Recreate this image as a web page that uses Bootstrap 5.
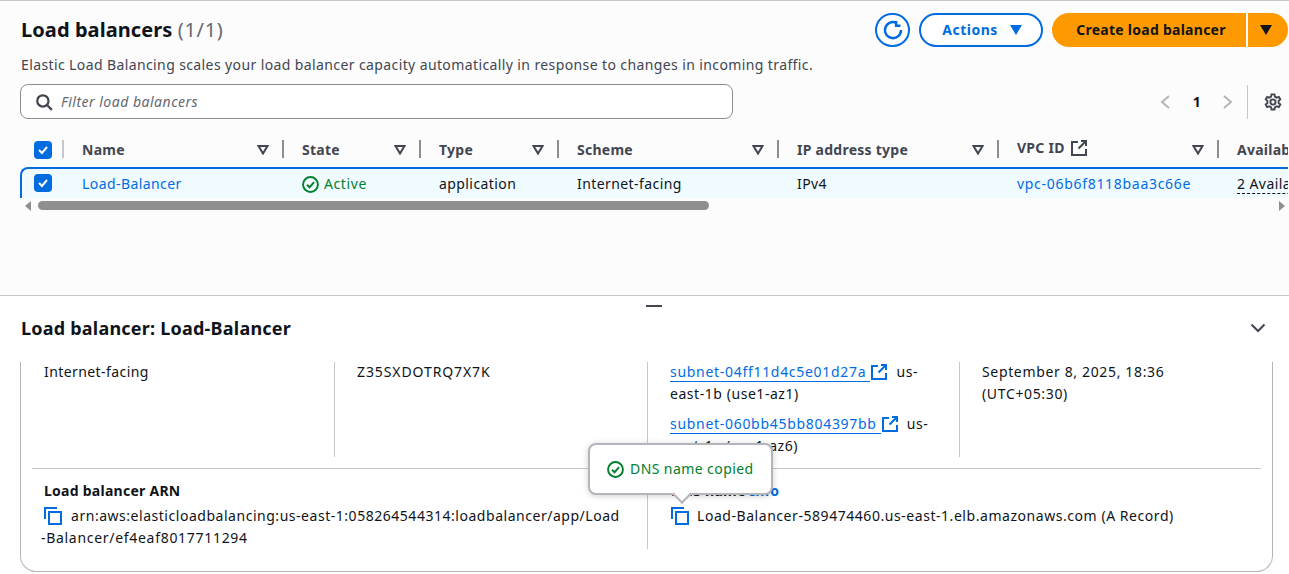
<!DOCTYPE html>
<html lang="en">
<head>
<meta charset="utf-8">
<title>Load balancers</title>
<link href="https://cdn.jsdelivr.net/npm/bootstrap@5.3.0/dist/css/bootstrap.min.css" rel="stylesheet">
<style>
html,body{height:574px;overflow:hidden}
body{font-family:"Noto Sans",sans-serif;font-size:14px;line-height:22px;color:#0f141a;background:#fff;letter-spacing:.42px}
a{color:#006ce0;text-decoration:none}
.fw-bold,b,.head-cell,.pill-btn{letter-spacing:.26px}
.id-text{letter-spacing:.7px}
.code-text{letter-spacing:.9px}
.date-text{letter-spacing:.65px}
.dns-text{letter-spacing:.55px}
.az-text{letter-spacing:.55px}
.top-pane{height:296px;background:#fcfcfd;border-top:1px solid #c6c6cd;border-bottom:1px solid #c6c6cd;padding:12px 1px 0 20px;overflow:hidden}
.page-title{font-size:20px;line-height:34px;font-weight:700;margin:0 0 0 1px;letter-spacing:.08px}
.page-title span{font-weight:400;color:#656871;letter-spacing:.7px}
.page-desc{color:#424650;line-height:20px;margin:8px 0 0 1px;font-size:14px;letter-spacing:.39px}
.pill-btn{height:34px;border-radius:17px;font-weight:700;font-size:14px;line-height:20px;display:flex;align-items:center;justify-content:center;background:#fff;border:2px solid #006ce0;color:#006ce0;padding:0}
.round-btn{width:35px}
.act-btn{width:124px;gap:12px;margin-left:9px;letter-spacing:.5px;padding-left:2px}
.go-wrap{margin-left:9px}
.go-btn{background:#f90;border:0;color:#0f141a;width:194px;border-radius:17px 0 0 17px;padding-left:4px}
.go-caret{background:#f90;border:0;width:40px;border-radius:0 17px 17px 0;margin-left:2px;padding-right:4px}
.filter-row{margin-top:9px}
.filter-box{width:713px;height:35px;border:1px solid #8c8c94;border-radius:8px;background:#fff;display:flex;align-items:center;padding-left:14px;gap:8px;color:#656871;font-style:italic;letter-spacing:.5px}
.pager{width:143px;color:#0f141a}
.pager b{font-weight:700;width:18px;text-align:center;margin:0 14px 0 16px}
.pager-prev{margin-left:13px}
.pager-sep{width:1px;height:34px;background:#c6c6cd;margin:0 16px 0 13px}
.tbl-wrap{overflow:hidden;margin-top:15px;width:1268px}
.lb-table{display:grid;grid-template-columns:44px 220px 137px 138px 220px 220px 220px 200px;width:1399px;margin:0}
.head-cell{height:33px;color:#424650;font-weight:700;display:flex;align-items:center;justify-content:space-between;padding:0 15px 2px 18px;position:relative;white-space:nowrap}
.head-cell::after{content:"";position:absolute;right:0;top:6px;height:18px;width:2px;background:#8c8c94}
.head-cell.first::after{background:#c6c6cd}
.head-cell.first{padding:0 0 2px 14px;justify-content:flex-start}
.head-cell.last::after{display:none}
.body-cell{height:31px;background:#f0fbff;border-top:2px solid #006ce0;padding:4px 0 0 18px;white-space:nowrap}
.body-cell.first{border-left:2px solid #006ce0;border-top-left-radius:8px;padding:5px 0 0 12px}
.tick{width:18px;height:18px;background:#006ce0;border-radius:4px;display:flex;align-items:center;justify-content:center}
.state-ok{color:#00802f;display:flex;align-items:center;gap:5px;letter-spacing:.6px}
.dash-under{border-bottom:1px dashed #0f141a}
.head-link{display:flex;gap:6px;align-items:center;position:relative;top:-2px}
.scroll-track{height:12px;margin-top:2px;position:relative;width:1268px}
.scroll-arrow-l{position:absolute;left:5px;top:1px;width:0;height:0;border:5px solid transparent;border-left:0;border-right:6px solid #8f8f8f}
.scroll-arrow-r{position:absolute;right:3px;top:1px;width:0;height:0;border:5px solid transparent;border-right:0;border-left:6px solid #8f8f8f}
.scroll-thumb{position:absolute;left:18px;top:1px;height:9px;width:671px;background:#8f8f8f;border-radius:5px}
.bottom-pane{height:278px;position:relative}
.drag-mark{position:absolute;left:646px;top:9px;width:16px;height:2px;background:#424650}
.panel-head{height:66px;padding:0 23px 2px 21px}
.panel-title{font-size:18px;line-height:24px;font-weight:700;margin:0;letter-spacing:.22px}
.detail-box{width:1253px;margin-left:20px;height:210px;border:1px solid #b4b4bb;border-top:0;border-radius:0 0 16px 16px;padding:0 11px}
.info-grid{display:grid;grid-template-columns:302px 313px 312px 1fr;height:95px;padding-top:0}
.info-grid>div{padding:0 12px 0 12px;height:95px;position:relative}
.info-grid>div+div{border-left:1px solid #c6c6cd;padding-left:22px;padding-right:24px}
.info-line{margin-top:-1px}
.subnet-gap{margin-top:8px}
.sub-link{border-bottom:1px solid #006ce0;padding-right:4px}
.link-ico{vertical-align:-3px;margin:0 5px 0 1px}
.wide-rule{height:1px;background:#c6c6cd;margin-top:11px}
.arn-grid{display:grid;grid-template-columns:615px 1fr;height:79px}
.arn-grid>div{padding-top:11px;position:relative}
.arn-left{padding-left:12px;padding-right:0}
.arn-right{border-left:1px solid #c6c6cd;padding-left:23px}
.arn-break{margin:3px 0 0 -3px;white-space:nowrap;letter-spacing:.53px}
.arn-tail{letter-spacing:.7px}
.copy-ico{vertical-align:-4px;margin:0 9px 0 3px}
.dns-ico{vertical-align:-4px;margin-right:8px}
.dns-line{margin-top:3px;white-space:nowrap}
.toast-pop{position:absolute;left:-60px;top:-26px;width:185px;height:52px;background:#fff;border:2px solid #b4b4bb;border-radius:8px;box-shadow:0 1px 6px rgba(15,20,26,.2);color:#00802f;display:flex;align-items:center;gap:6px;padding:0 0 0 17px;z-index:3}
.toast-pop::after{content:"";position:absolute;left:85px;bottom:-8px;width:14px;height:14px;background:#fff;border-right:2px solid #b4b4bb;border-bottom:2px solid #b4b4bb;transform:rotate(45deg)}
</style>
</head>
<body>
<section class="top-pane">
  <div class="d-flex justify-content-between align-items-start">
    <div>
      <h1 class="page-title">Load balancers <span>(1/1)</span></h1>
      <p class="page-desc">Elastic Load Balancing scales your load balancer capacity automatically in response to changes in incoming traffic.</p>
    </div>
    <div class="d-flex">
      <button class="pill-btn round-btn" aria-label="Refresh"><svg width="20" height="20" viewBox="0 0 16 16" fill="none" stroke="#006ce0" stroke-width="2"><path d="M10.5 2.2A6.4 6.4 0 1 0 14.4 8"/><path d="M10.5 .8v3.7H14"/></svg></button>
      <button class="pill-btn act-btn">Actions <svg width="12" height="10" viewBox="0 0 12 10"><path d="M0 0h12L6 10z" fill="#006ce0"/></svg></button>
      <div class="d-flex go-wrap">
        <button class="pill-btn go-btn">Create load balancer</button>
        <button class="pill-btn go-caret" aria-label="More"><svg width="12" height="10" viewBox="0 0 12 10"><path d="M0 0h12L6 10z" fill="#0f141a"/></svg></button>
      </div>
    </div>
  </div>
  <div class="d-flex justify-content-between align-items-center filter-row">
    <div class="filter-box"><svg width="18" height="18" viewBox="0 0 16 16" fill="none" stroke="#424650" stroke-width="2"><circle cx="7" cy="7" r="5"/><path d="M10.6 10.6 15 15"/></svg>Filter load balancers</div>
    <div class="pager d-flex align-items-center">
      <svg class="pager-prev" width="14" height="16" viewBox="0 0 14 16" fill="none" stroke="#b4b4bb" stroke-width="2"><path d="M11 2 4 8l7 6"/></svg>
      <b>1</b>
      <svg width="14" height="16" viewBox="0 0 14 16" fill="none" stroke="#b4b4bb" stroke-width="2"><path d="m4 2 7 6-7 6"/></svg>
      <span class="pager-sep"></span>
      <svg width="18" height="18" viewBox="0 0 16 16" fill="none" stroke="#424650" stroke-width="1.7"><circle cx="8" cy="8" r="2.3"/><path d="M6.7 1.2h2.6l.4 2 1.6.9 1.9-.7 1.3 2.3-1.5 1.3v1.9l1.5 1.3-1.3 2.3-1.9-.7-1.6.9-.4 2H6.7l-.4-2-1.6-.9-1.9.7-1.3-2.3 1.5-1.3V7l-1.5-1.3 1.3-2.3 1.9.7 1.6-.9z"/></svg>
    </div>
  </div>
  <div class="tbl-wrap">
    <div class="lb-table">
      <div class="head-cell first"><span class="tick"><svg width="12" height="12" viewBox="0 0 12 12" fill="none" stroke="#fff" stroke-width="2"><path d="m2 6 3 3 5-6"/></svg></span></div>
      <div class="head-cell">Name <svg width="12" height="10" viewBox="0 0 12 10" fill="none" stroke="#424650" stroke-width="2"><path d="M1.5 1h9L6 8.5z"/></svg></div>
      <div class="head-cell">State <svg width="12" height="10" viewBox="0 0 12 10" fill="none" stroke="#424650" stroke-width="2"><path d="M1.5 1h9L6 8.5z"/></svg></div>
      <div class="head-cell">Type <svg width="12" height="10" viewBox="0 0 12 10" fill="none" stroke="#424650" stroke-width="2"><path d="M1.5 1h9L6 8.5z"/></svg></div>
      <div class="head-cell">Scheme <svg width="12" height="10" viewBox="0 0 12 10" fill="none" stroke="#424650" stroke-width="2"><path d="M1.5 1h9L6 8.5z"/></svg></div>
      <div class="head-cell">IP address type <svg width="12" height="10" viewBox="0 0 12 10" fill="none" stroke="#424650" stroke-width="2"><path d="M1.5 1h9L6 8.5z"/></svg></div>
      <div class="head-cell"><span class="head-link">VPC ID <svg width="16" height="16" viewBox="0 0 16 16" fill="none" stroke="#424650" stroke-width="2"><path d="M7 2H1v13h14V9"/><path d="M10 1h5v5M15 1 7.5 8.5"/></svg></span> <svg width="12" height="10" viewBox="0 0 12 10" fill="none" stroke="#424650" stroke-width="2"><path d="M1.5 1h9L6 8.5z"/></svg></div>
      <div class="head-cell last">Availability Zones</div>

      <div class="body-cell first"><span class="tick"><svg width="12" height="12" viewBox="0 0 12 12" fill="none" stroke="#fff" stroke-width="2"><path d="m2 6 3 3 5-6"/></svg></span></div>
      <div class="body-cell"><a href="#">Load-Balancer</a></div>
      <div class="body-cell"><span class="state-ok"><svg width="17" height="17" viewBox="0 0 16 16" fill="none" stroke="#00802f" stroke-width="1.8"><circle cx="8" cy="8" r="7"/><path d="m4.7 8.2 2.4 2.4 4.3-4.8"/></svg>Active</span></div>
      <div class="body-cell">application</div>
      <div class="body-cell">Internet-facing</div>
      <div class="body-cell">IPv4</div>
      <div class="body-cell"><a class="id-text" href="#">vpc-06b6f8118baa3c66e</a></div>
      <div class="body-cell"><span class="dash-under">2 Availability Zones</span></div>
    </div>
  </div>
  <div class="scroll-track"><span class="scroll-arrow-l"></span><span class="scroll-thumb"></span><span class="scroll-arrow-r"></span></div>
</section>
<section class="bottom-pane">
  <span class="drag-mark"></span>
  <div class="panel-head d-flex justify-content-between align-items-center">
    <h2 class="panel-title">Load balancer: Load-Balancer</h2>
    <svg width="16" height="10" viewBox="0 0 16 10" fill="none" stroke="#424650" stroke-width="2"><path d="m1.5 1.5 6.5 6.5 6.5-6.5"/></svg>
  </div>
  <div class="detail-box">
    <div class="info-grid">
      <div><div class="info-line">Internet-facing</div></div>
      <div><div class="info-line code-text">Z35SXDOTRQ7X7K</div></div>
      <div class="az-text">
        <div class="info-line"><a class="sub-link id-text" href="#">subnet-04ff11d4c5e01d27a</a><a href="#"><svg class="link-ico" width="16" height="16" viewBox="0 0 16 16" fill="none" stroke="#006ce0" stroke-width="2"><path d="M7 2H1v13h14V9"/><path d="M10 1h5v5M15 1 7.5 8.5"/></svg></a> us-east-1b (use1-az1)</div>
        <div class="subnet-gap"><a class="sub-link id-text" href="#">subnet-060bb45bb804397bb</a><a href="#"><svg class="link-ico" width="16" height="16" viewBox="0 0 16 16" fill="none" stroke="#006ce0" stroke-width="2"><path d="M7 2H1v13h14V9"/><path d="M10 1h5v5M15 1 7.5 8.5"/></svg></a> us-east-1a (use1-az6)</div>
      </div>
      <div><div class="info-line date-text">September 8, 2025, 18:36 (UTC+05:30)</div></div>
    </div>
    <div class="wide-rule"></div>
    <div class="arn-grid">
      <div class="arn-left">
        <div class="fw-bold">Load balancer ARN</div>
        <div class="arn-break"><svg class="copy-ico" width="18" height="18" viewBox="0 0 18 18" fill="none" stroke="#006ce0" stroke-width="2"><path d="M1 12V1h12"/><path d="M5 5h12v12H5z"/></svg>arn:aws:elasticloadbalancing:us-east-1:058264544314:loadbalancer/app/Load<br><span class="arn-tail">-Balancer/ef4eaf8017711294</span></div>
      </div>
      <div class="arn-right">
        <div class="toast-pop"><svg width="17" height="17" viewBox="0 0 16 16" fill="none" stroke="#00802f" stroke-width="1.8"><circle cx="8" cy="8" r="7"/><path d="m4.7 8.2 2.4 2.4 4.3-4.8"/></svg>DNS name copied</div>
        <div class="fw-bold">DNS name <a href="#">Info</a></div>
        <div class="dns-line dns-text"><svg class="dns-ico" width="18" height="18" viewBox="0 0 18 18" fill="none" stroke="#006ce0" stroke-width="2"><path d="M1 12V1h12"/><path d="M5 5h12v12H5z"/></svg>Load-Balancer-589474460.us-east-1.elb.amazonaws.com (A Record)</div>
      </div>
    </div>
  </div>
</section>
</body>
</html>
